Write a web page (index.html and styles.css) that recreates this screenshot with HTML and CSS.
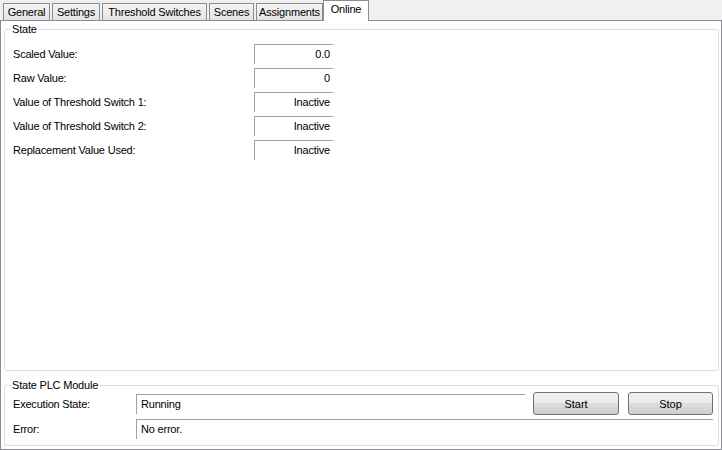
FILE: index.html
```html
<!DOCTYPE html>
<html lang="en">

<head>
    <meta charset="UTF-8">
    <title>Online</title>
    <link rel="stylesheet" href="styles.css">
</head>

<body>
    <div class="tabs">
        <div class="tab t-general">General</div>
        <div class="tab t-settings">Settings</div>
        <div class="tab t-threshold">Threshold Switches</div>
        <div class="tab t-scenes">Scenes</div>
        <div class="tab t-assign">Assignments</div>
        <div class="tab t-online active">Online</div>
    </div>
    <div class="panel">
        <fieldset class="group state">
            <legend>State</legend>
            <div class="row"><span class="label">Scaled Value:</span><span class="value">0.0</span></div>
            <div class="row"><span class="label">Raw Value:</span><span class="value">0</span></div>
            <div class="row"><span class="label">Value of Threshold Switch 1:</span><span class="value">Inactive</span></div>
            <div class="row"><span class="label">Value of Threshold Switch 2:</span><span class="value">Inactive</span></div>
            <div class="row"><span class="label">Replacement Value Used:</span><span class="value">Inactive</span></div>
        </fieldset>
        <fieldset class="group plc">
            <legend>State PLC Module</legend>
            <div class="plc-row">
                <span class="plc-label">Execution State:</span>
                <span class="plc-field">Running</span>
                <button class="start">Start</button>
                <button class="stop">Stop</button>
            </div>
            <div class="plc-row">
                <span class="plc-label">Error:</span>
                <span class="plc-field">No error.</span>
            </div>
        </fieldset>
    </div>
</body>

</html>
```

FILE: styles.css
```css
* {
    box-sizing: border-box;
}

body {
    margin: 0;
    background: #f0f0f0;
    font: 11px "Liberation Sans", Arial, sans-serif;
    letter-spacing: -0.2px;
    color: #000;
}

.tabs {
    display: flex;
    align-items: flex-end;
    gap: 2px;
    height: 20px;
    padding-left: 3px;
}

.tab {
    position: relative;
    z-index: 1;
    height: 17px;
    line-height: 16px;
    text-align: center;
    border: 1px solid #898c95;
    border-bottom: none;
    background: linear-gradient(#f5f5f5, #e4e4e4);
}

.t-general {
    width: 47px;
}

.t-settings {
    width: 48px;
}

.t-threshold {
    width: 105px;
}

.t-scenes {
    width: 45px;
}

.t-assign {
    width: 67px;
}

.t-online {
    width: 46px;
    margin-left: -2px;
}

.tab.active {
    height: 21px;
    margin-bottom: -1px;
    background: #fff;
}

.panel {
    height: 430px;
    border: 1px solid #898c95;
    background: #fff;
    padding: 2px 2px 3px 3px;
    display: flex;
    flex-direction: column;
}

.group {
    margin: 0;
    min-width: 0;
    border: 1px solid #d5dfe5;
    border-radius: 3px;
}

.group legend {
    padding: 0 1px;
    margin-left: -2px;
    line-height: 13px;
}

.state {
    flex: 1;
    padding: 8px 8px 0 8px;
}

.row {
    display: flex;
    align-items: center;
    height: 20px;
    margin-bottom: 4px;
}

.label {
    width: 241px;
}

.value {
    width: 79px;
    height: 20px;
    line-height: 19px;
    padding-right: 3px;
    text-align: right;
    border-top: 1px solid #a0a0a0;
    border-left: 1px solid #a0a0a0;
}

.plc {
    margin-top: 8px;
    padding: 0 5px 6px 8px;
}

.plc-row {
    display: flex;
    align-items: center;
}

.plc-row + .plc-row {
    margin-top: 4px;
}

.plc-label {
    width: 123px;
}

.plc-field {
    flex: 1;
    height: 20px;
    line-height: 19px;
    padding-left: 4px;
    border-top: 1px solid #a0a0a0;
    border-left: 1px solid #a0a0a0;
}

button {
    height: 23px;
    padding: 0;
    font: inherit;
    color: #000;
    border: 1px solid #707070;
    border-radius: 3px;
    background: linear-gradient(#f2f2f2, #ebebeb 50%, #dddddd 50%, #cfcfcf);
}

.start {
    width: 86px;
    margin-left: 8px;
}

.stop {
    width: 85px;
    margin-left: 9px;
}
```
